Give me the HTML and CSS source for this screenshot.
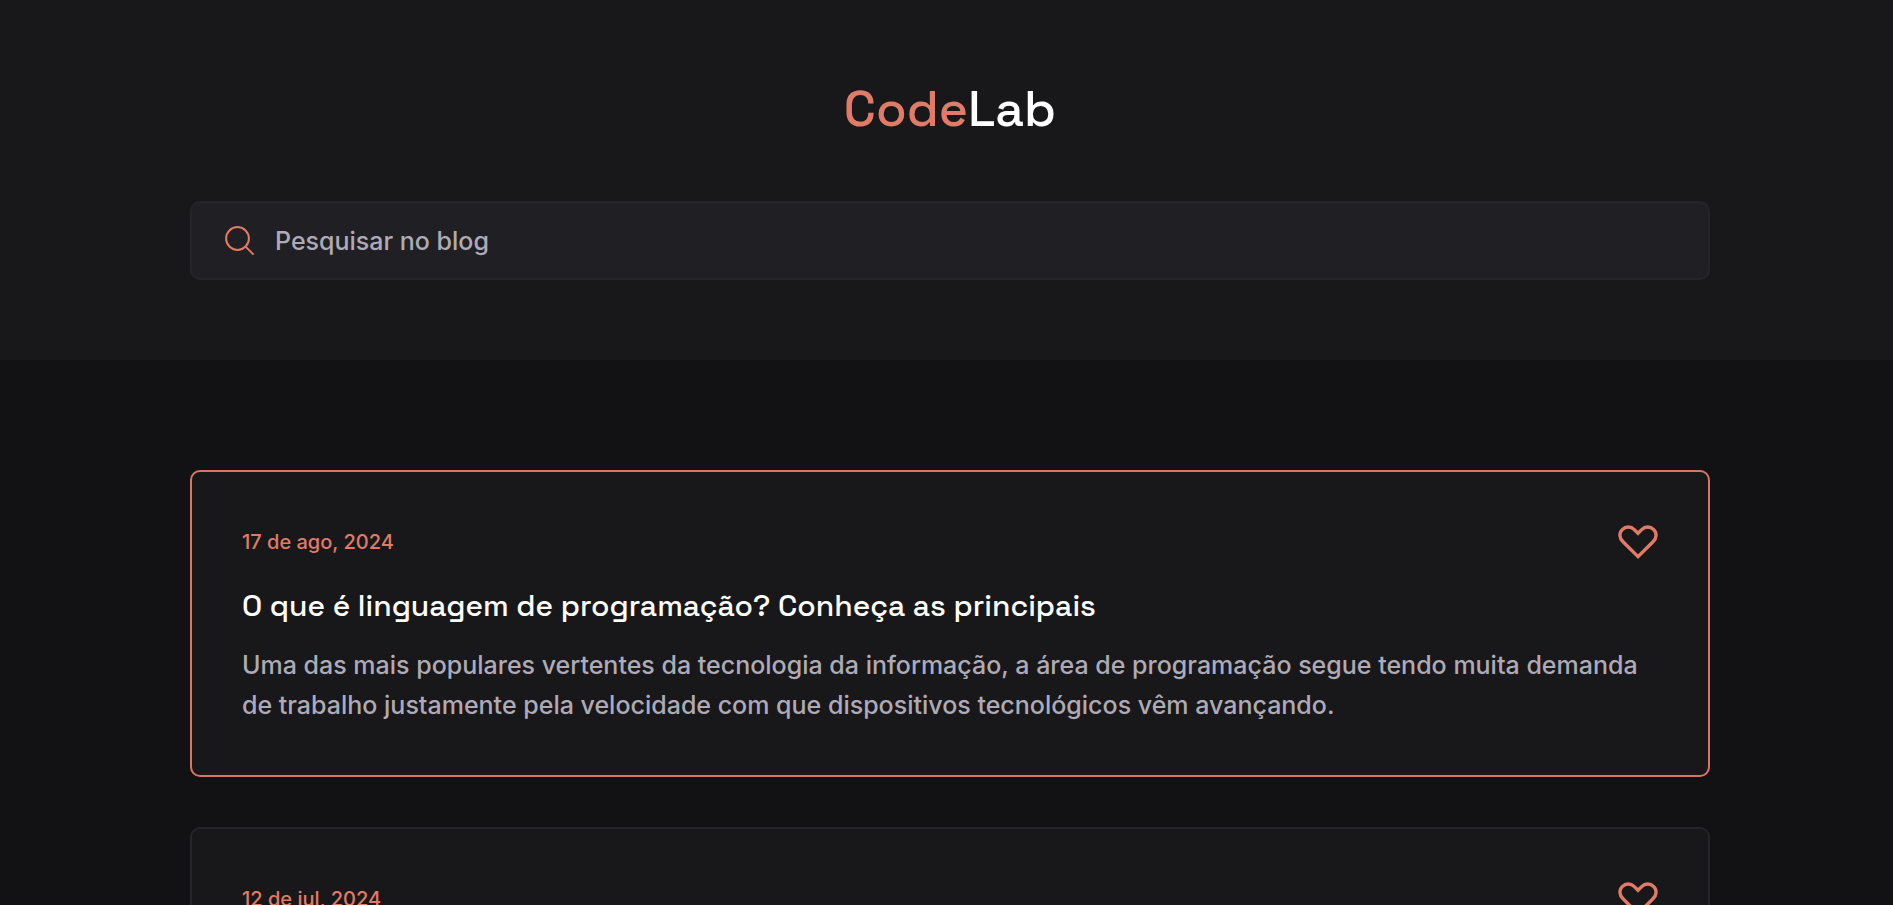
FILE: index.html
```html
<!DOCTYPE html>
<html lang="pt-BR">
<head>
<meta charset="utf-8">
<title>CodeLab</title>
<link rel="stylesheet" href="styles.css">
</head>
<body>
<header class="header">
  <h1 class="logo"><span class="logo-accent">Code</span>Lab</h1>
  <form class="search" role="search">
    <label class="search-label" for="search" aria-label="Pesquisar">
      <svg class="search-icon" viewBox="0 0 30 30"><circle cx="12.5" cy="12.5" r="11.4"/><path d="M20.6 20.6 28.6 28.6"/></svg>
    </label>
    <input class="search-input" id="search" type="search" placeholder="Pesquisar no blog">
  </form>
</header>
<main class="posts">
  <article class="card card-active">
    <div class="card-top">
      <time class="date" datetime="2024-08-17">17 de ago, 2024</time>
      <button class="like" type="button" aria-label="Curtir"><svg class="heart" viewBox="0 0 40 34"><path d="M20 31.6 5 16.8C1.200 13 .9 8 4.300 4.600 7.600 1.200 12.900 1.200 16.300 4.600L20 8.300l3.700-3.700c3.400-3.400 8.700-3.400 12 0 3.400 3.400 3.100 8.400-.7 12.200Z"/></svg></button>
    </div>
    <h2 class="title">O que é linguagem de programação? Conheça as principais</h2>
    <p class="text">Uma das mais populares vertentes da tecnologia da informação, a área de programação segue tendo muita demanda de trabalho justamente pela velocidade com que dispositivos tecnológicos vêm avançando.</p>
  </article>
  <article class="card">
    <div class="card-top">
      <time class="date" datetime="2024-07-12">12 de jul, 2024</time>
      <button class="like" type="button" aria-label="Curtir"><svg class="heart" viewBox="0 0 40 34"><path d="M20 31.6 5 16.8C1.200 13 .9 8 4.300 4.600 7.600 1.200 12.900 1.200 16.300 4.600L20 8.300l3.700-3.700c3.400-3.400 8.700-3.400 12 0 3.400 3.400 3.100 8.400-.7 12.200Z"/></svg></button>
    </div>
  </article>
</main>
</body>
</html>
```
FILE: styles.css
```css
* { box-sizing: border-box; margin: 0; }
html { background: #121214; scrollbar-width: none; }
body {
  background: #121214;
  color: #fff;
  font-family: "Inter", sans-serif;
  font-weight: 500;
}
.header {
  padding: 77px 183px 80px 190px;
  background: #18181a;
}
.logo {
  font-family: "Space Grotesk", "Inter", sans-serif;
  font-size: 50px;
  font-weight: 500;
  line-height: 64px;
  text-align: center;
}
.logo-accent { color: #e07b67; }
.search {
  display: flex;
  align-items: center;
  gap: 20px;
  height: 79px;
  margin-top: 60px;
  padding: 0 33px;
  background: #202024;
  border: 2px solid #252529;
  border-radius: 10px;
}
.search-label { display: flex; }
.search-icon {
  width: 30px;
  height: 30px;
  fill: none;
  stroke: #e07b67;
  stroke-width: 2;
}
.search-input {
  flex: 1;
  padding: 0;
  border: 0;
  outline: 0;
  background: transparent;
  color: #afabb6;
  font: inherit;
  font-size: 25px;
}
.search-input::placeholder { color: #afabb6; opacity: 1; }
.posts {
  display: flex;
  flex-direction: column;
  gap: 50px;
  padding: 110px 183px 50px 190px;
}
.card {
  padding: 50px;
  background: #18181a;
  border: 2px solid #252529;
  border-radius: 10px;
}
.card-active { border-color: #d97663; }
.card-top {
  display: flex;
  align-items: center;
  justify-content: space-between;
}
.date { color: #e07b67; font-size: 20px; line-height: 40px; }
.like {
  display: flex;
  padding: 0;
  border: 0;
  background: none;
}
.heart {
  width: 40px;
  height: 34px;
  fill: none;
  stroke: #e07b67;
  stroke-width: 3.4;
}
.title {
  margin-top: 25px;
  font-family: "Space Grotesk", "Inter", sans-serif;
  font-size: 30px;
  font-weight: 500;
  line-height: 38px;
}
.text {
  margin-top: 20px;
  color: #afabb6;
  font-size: 25px;
  line-height: 40px;
}
```
